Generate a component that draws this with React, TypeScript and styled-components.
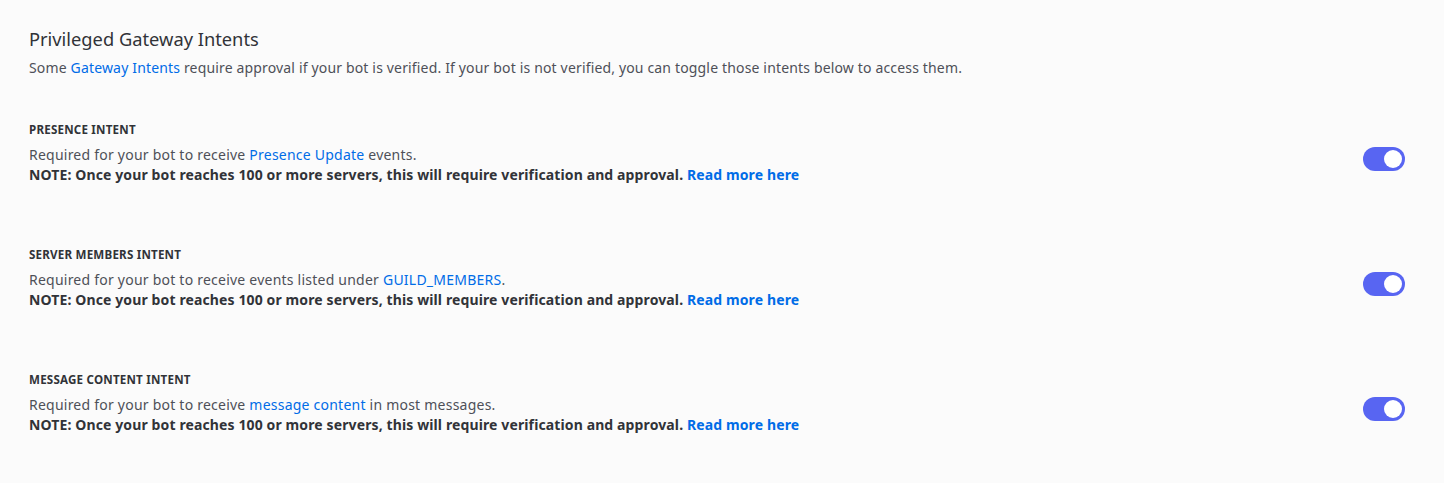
import React from "react";
import styled, { createGlobalStyle } from "styled-components";

const Global = createGlobalStyle`
  html, body { margin: 0; padding: 0; background: #fbfbfb; }
  body { font-family: "Noto Sans", "Open Sans", sans-serif; }
`;

const Page = styled.div`
  padding: 26px 39px 0 29px;
  background: #fbfbfb;
  min-height: 483px;
  box-sizing: border-box;
`;

const Title = styled.h2`
  margin: 0;
  font-size: 18.3px;
  font-weight: 400;
  line-height: 26px;
  color: #313338;
`;

const Intro = styled.p`
  margin: 6px 0 0;
  font-size: 14px;
  line-height: 20px;
  letter-spacing: 0.16px;
  color: #4e5058;
`;

const Link = styled.a`
  color: #006ce7;
  text-decoration: none;
  font-weight: inherit;
`;

const List = styled.div`
  display: flex;
  flex-direction: column;
  gap: 62px;
  margin-top: 44px;
`;

const Row = styled.div`
  display: flex;
  align-items: center;
  justify-content: space-between;
`;

const Info = styled.div`
  display: flex;
  flex-direction: column;
`;

const Label = styled.div`
  font-size: 11.6px;
  font-weight: 700;
  line-height: 16px;
  letter-spacing: 0.2px;
  text-transform: uppercase;
  color: #313338;
  margin-bottom: 7px;
`;

const Text = styled.div<{ $bold?: boolean }>`
  font-size: 14px;
  line-height: 20px;
  font-weight: ${(p) => (p.$bold ? 700 : 400)};
  letter-spacing: ${(p) => (p.$bold ? "0.12px" : "0.23px")};
  color: ${(p) => (p.$bold ? "#313338" : "#4e5058")};
`;

const Switch = styled.div`
  width: 42px;
  height: 24px;
  border-radius: 12px;
  background: #5865f2;
  display: flex;
  align-items: center;
  justify-content: flex-end;
  padding: 0 3px;
  box-sizing: border-box;
  margin-top: 10px;
`;

const Knob = styled.div`
  width: 18px;
  height: 18px;
  border-radius: 50%;
  background: #ffffff;
`;

const intents = [
  { label: "Presence Intent", pre: "Required for your bot to receive ", link: "Presence Update", post: " events." },
  { label: "Server Members Intent", pre: "Required for your bot to receive events listed under ", link: "GUILD_MEMBERS", post: "." },
  { label: "Message Content Intent", pre: "Required for your bot to receive ", link: "message content", post: " in most messages." },
];

export default function App() {
  return (
    <>
      <Global />
      <Page>
        <Title>Privileged Gateway Intents</Title>
        <Intro>
          Some <Link>Gateway Intents</Link> require approval if your bot is verified. If your bot is not verified, you can toggle those intents below to access them.
        </Intro>
        <List>
          {intents.map((it) => (
            <Row key={it.label}>
              <Info>
                <Label>{it.label}</Label>
                <Text>
                  {it.pre}
                  <Link>{it.link}</Link>
                  {it.post}
                </Text>
                <Text $bold>
                  NOTE: Once your bot reaches 100 or more servers, this will require verification and approval. <Link>Read more here</Link>
                </Text>
              </Info>
              <Switch>
                <Knob />
              </Switch>
            </Row>
          ))}
        </List>
      </Page>
    </>
  );
}
